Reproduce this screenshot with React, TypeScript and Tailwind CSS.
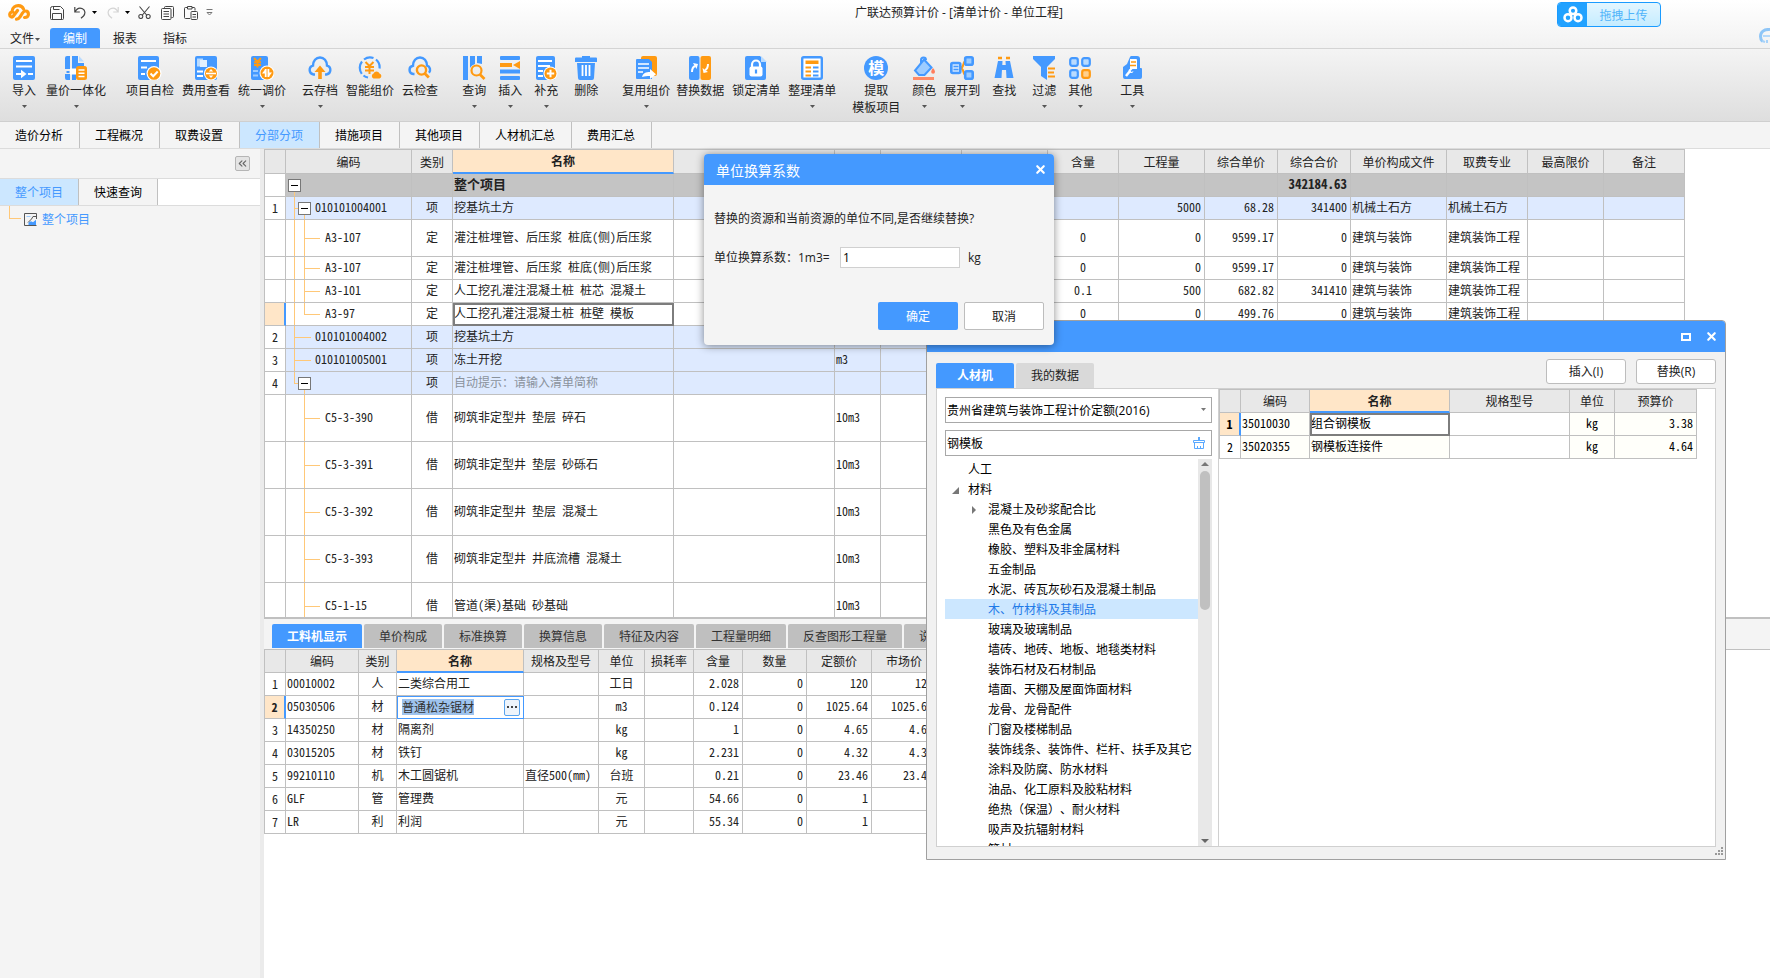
import type { ReactNode } from 'react';
import { X, ChevronsLeft } from 'lucide-react';
import { clsx } from 'clsx';

const BLUE = '#4499ff';
const ORANGE = '#ff9a12';

/* ---------- icons ---------- */

function Svg({ children, size = 24 }: { children: ReactNode; size?: number }) {
  return (
    <svg width={size} height={size} viewBox="0 0 24 24" fill="none" aria-hidden="true">
      {children}
    </svg>
  );
}

function Caret({ className = 'text-[#555]' }: { className?: string }) {
  return (
    <svg width="5" height="3" viewBox="0 0 5 3" className={className} aria-hidden="true">
      <path d="M0 0h5L2.5 3z" fill="currentColor" />
    </svg>
  );
}

const icons: Record<string, ReactNode> = {
  import: (
    <Svg>
      <rect x="1" width="22" height="24" rx="2" fill={BLUE} />
      <path d="M4 5h16M4 10.5h16M4 18h6M16 18h5" stroke="#fff" strokeWidth="2" />
      <path d="M9 13.8l5.500 4.200L9 22.200z" fill="#fff" />
    </Svg>
  ),
  integrate: (
    <Svg>
      <path d="M3 0h3v13H1V2a2 2 0 012-2zM1 18h5v6H3a2 2 0 01-2-2zM8 0h6v7h6v4h-6v2H8zM8 18h4v6H8z" fill={BLUE} />
      <path d="M15 0l5 5.500h-5z" fill="#b9dbff" />
      <path d="M2.500 16h3" stroke={BLUE} strokeWidth="2" />
      <rect x="6" y="12.500" width="6" height="6" fill="#fff" />
      <rect x="12" y="10" width="11" height="14" rx="2.500" fill={ORANGE} />
      <path d="M14.500 14h6M14.500 17.200h6M14.500 20.400h6" stroke="#fff" strokeWidth="1.500" />
    </Svg>
  ),
  check: (
    <Svg>
      <rect x="0" width="21" height="24" rx="2" fill={BLUE} />
      <path d="M3 5h15M3 11.500h6M3 18h4" stroke="#fff" strokeWidth="2" />
      <circle cx="16" cy="17.500" r="7.500" fill="#fff" />
      <circle cx="16" cy="17.500" r="6.300" fill={ORANGE} />
      <path d="M12.500 17.500l2.700 2.700 4.500-4.700" stroke="#fff" strokeWidth="2" />
    </Svg>
  ),
  cost: (
    <Svg>
      <rect x="1" width="22" height="24" rx="2" fill={BLUE} />
      <path d="M3 2.500h6v8H3z" fill="#b9dbff" />
      <path d="M6 4h7v7H6z" fill="#e3f1ff" />
      <path d="M3 15.500h6M3 20h6" stroke="#fff" strokeWidth="2" />
      <circle cx="17" cy="17.500" r="7" fill="#fff" />
      <circle cx="17" cy="17.500" r="6" fill={ORANGE} />
      <path d="M12 17.500h10" stroke="#fff" strokeWidth="1.600" />
      <path d="M14.800 15.500l2.200-2.500 2.200 2.500zM14.800 19.500L17 22l2.200-2.500z" fill="#fff" />
    </Svg>
  ),
  adjust: (
    <Svg>
      <rect x="1" width="17" height="24" rx="2" fill={BLUE} />
      <path d="M4 2l3.500 4L11 2M7.500 6v5.500M4 6.200h7M4 9h7" stroke={ORANGE} strokeWidth="1.900" />
      <path d="M3 15h5M3 19.500h5" stroke="#9dccff" strokeWidth="2" />
      <circle cx="17" cy="17" r="7.500" fill="#fff" />
      <circle cx="17" cy="17" r="6.500" fill={ORANGE} />
      <path d="M15.700 13v8M18.400 13v8" stroke="#fff" strokeWidth="1.800" />
      <path d="M12 17.500l3.500-4.500v4.500zM22 16.500L18.500 21v-4.500z" fill="#fff" />
    </Svg>
  ),
  cloudUp: (
    <Svg>
      <path d="M7 18.500H5.500A4.500 4.500 0 015 9.700C5 5 8 1.500 12 1.500S19 5 19 9.700a4.500 4.500 0 01-.5 8.800H17" stroke={BLUE} strokeWidth="2.400" />
      <path d="M12 9.500l5.500 6.500h-3.700v7h-3.600v-7H6.500z" fill={ORANGE} />
    </Svg>
  ),
  smart: (
    <Svg>
      <path d="M6 3.500A10 10 0 0115.500 2M3.800 17.800A10 10 0 014 5.500M10 21.500a10 10 0 01-4.500-2M18 3.500a10 10 0 013.500 9" stroke={BLUE} strokeWidth="2.200" />
      <path d="M7.500 6l4 4 4-4M11.500 10v8M7 11h9M7 14.500h9" stroke={ORANGE} strokeWidth="2" />
      <path d="M15.500 22.500a2.700 2.700 0 010-5 3.300 3.300 0 016 0 2.600 2.600 0 010 5z" fill={ORANGE} />
    </Svg>
  ),
  cloudCheck: (
    <Svg>
      <path d="M6.500 18H5.200A4.200 4.200 0 015 9.700C5 5 8 1.500 12 1.500S19 5 19 9.700a4.300 4.300 0 012 7" stroke={BLUE} strokeWidth="2.400" />
      <circle cx="13.500" cy="14" r="4.600" stroke={ORANGE} strokeWidth="2.400" />
      <path d="M16.800 17.500l4 4" stroke={ORANGE} strokeWidth="2.800" />
    </Svg>
  ),
  query: (
    <Svg>
      <path d="M1 0h5v24H1z" fill={BLUE} />
      <path d="M8 0h5v8a8 8 0 00-5 4zM15 0h5v8l-5-1z" fill={BLUE} />
      <circle cx="14.500" cy="14.500" r="5" stroke={ORANGE} strokeWidth="2.200" />
      <path d="M18 18.500l4.500 4.500" stroke={ORANGE} strokeWidth="2.600" />
    </Svg>
  ),
  insert: (
    <Svg>
      <path d="M3 0h18a1 1 0 011 1v2a1 1 0 01-1 1H3a1 1 0 01-1-1V1a1 1 0 011-1zM2 13.500h20v4H2zM3 20h18a1 1 0 011 1v2a1 1 0 01-1 1H3a1 1 0 01-1-1v-2a1 1 0 011-1z" fill={BLUE} />
      <path d="M2 7h12v4H2zM15 9l7-4v8z" fill={ORANGE} />
    </Svg>
  ),
  supplement: (
    <Svg>
      <rect x="2" width="19" height="24" rx="2" fill={BLUE} />
      <path d="M4 5h14M4 10h12M4 15h5M4 20h5" stroke="#fff" strokeWidth="1.800" />
      <circle cx="16.500" cy="17.500" r="7" fill="#fff" />
      <circle cx="16.500" cy="17.500" r="6" fill={ORANGE} />
      <path d="M12.800 17.500h7.400M16.500 13.800v7.400" stroke="#fff" strokeWidth="2" />
    </Svg>
  ),
  trash: (
    <Svg>
      <path d="M8 0h8v1.500h6a1 1 0 011 1V6H1V2.500a1 1 0 011-1h6zM3 7h18l-1 15a2 2 0 01-2 2H6a2 2 0 01-2-2z" fill={BLUE} />
      <path d="M8.500 9v11M12 9v11M15.500 9v11" stroke="#fff" strokeWidth="1.800" />
    </Svg>
  ),
  reuse: (
    <Svg>
      <rect x="7" width="16" height="20" rx="2" fill={ORANGE} />
      <path d="M3 3h12l3 3v17H3a1 1 0 01-1-1V4a1 1 0 011-1z" fill={BLUE} />
      <path d="M4 8h11M4 12h11M4 16h5" stroke="#fff" strokeWidth="1.700" />
      <path d="M8 21c1-4 4-5 8-5v-3l6 5.200-6 4.800v-3c-3 0-5 0-8 1z" fill="#fff" />
    </Svg>
  ),
  replace: (
    <Svg>
      <rect x="1" width="10.500" height="24" rx="2" fill={BLUE} />
      <rect x="12.500" width="10.500" height="24" rx="2" fill={ORANGE} />
      <path d="M4 16c0-3 .5-5 3-6" stroke="#fff" strokeWidth="2" />
      <path d="M5 7l5 1-1.500 5z" fill="#fff" />
      <path d="M20 8c0 3-.5 5-3 6" stroke="#fff" strokeWidth="2" />
      <path d="M14.500 12l1 5 4.500-1z" fill="#fff" />
    </Svg>
  ),
  lock: (
    <Svg>
      <path d="M3 0h13l6 6v16a2 2 0 01-2 2H3a2 2 0 01-2-2V2a2 2 0 012-2z" fill={BLUE} />
      <path d="M17 0l6 6h-6z" fill="#b9dbff" />
      <path d="M8 11V8.500a4 4 0 018 0V11" stroke="#fff" strokeWidth="2.200" />
      <rect x="5.500" y="10.500" width="13" height="10" rx="2" fill="#fff" />
      <path d="M12 13.500v4" stroke={BLUE} strokeWidth="2.200" />
    </Svg>
  ),
  tidy: (
    <Svg>
      <rect x="2.200" y="1.200" width="19.600" height="21.600" rx="1.500" fill="#fff" stroke={BLUE} strokeWidth="2.400" />
      <path d="M5.500 4.500h13V8h-13z" fill={ORANGE} />
      <path d="M5.500 11.500H11M5.500 15.500H11M5.500 19.500H11" stroke={ORANGE} strokeWidth="2" />
      <path d="M13 11.500h5.500M13 15.500h5.500M13 19.500h5.500" stroke={BLUE} strokeWidth="2" />
    </Svg>
  ),
  color: (
    <Svg>
      <path d="M9 10V4a2.500 2.500 0 015 0" stroke={BLUE} strokeWidth="2" />
      <path d="M12 3.500l7.500 8-7 7.500H7l-4-4.500z" fill="#9dccff" stroke={BLUE} strokeWidth="2" />
      <path d="M21 12c1.500 2 2 3 2 3.800a1.900 1.900 0 01-3.800 0c0-.8.500-1.800 1.800-3.800z" fill="#ff7d5c" />
      <path d="M1 21h21v3H1z" fill="#ff8a66" />
    </Svg>
  ),
  expand: (
    <Svg>
      <path d="M10 12c5 0 2-7 6-7M10 12c5 0 2 7 6 7" stroke={ORANGE} strokeWidth="2" />
      <rect x="1.300" y="7" width="9" height="10" rx="1.500" fill="#cfe6ff" stroke={BLUE} strokeWidth="2.600" />
      <path d="M3.500 10.500h5M3.500 13.500h5" stroke={BLUE} strokeWidth="1.400" />
      <rect x="15.200" y="1.300" width="7.500" height="7.500" rx="1.500" fill="#9dccff" stroke={BLUE} strokeWidth="2.600" />
      <rect x="15.200" y="15.200" width="7.500" height="7.500" rx="1.500" fill="#9dccff" stroke={BLUE} strokeWidth="2.600" />
    </Svg>
  ),
  find: (
    <Svg>
      <path d="M6 2h4M14 2h4" stroke={ORANGE} strokeWidth="2.500" />
      <path d="M6 5h4.500L9.500 22H2.500zM13.500 5H18l3.500 17h-7zM10 9h4v5h-4z" fill={BLUE} />
    </Svg>
  ),
  filter: (
    <Svg>
      <path d="M1 0h22v3l-8 8v13l-6-4v-9L1 3z" fill={BLUE} />
      <path d="M16 12.500h7M16 16.500h6M16 20.500h7" stroke={ORANGE} strokeWidth="2" />
    </Svg>
  ),
  more: (
    <Svg>
      <rect x="2.200" y="2.200" width="7.600" height="7.600" rx="2" fill="#b9dbff" stroke={BLUE} strokeWidth="2.200" />
      <rect x="14.200" y="2.200" width="7.600" height="7.600" rx="2" fill="#b9dbff" stroke={BLUE} strokeWidth="2.200" />
      <rect x="2.200" y="14.200" width="7.600" height="7.600" rx="2" fill="#b9dbff" stroke={BLUE} strokeWidth="2.200" />
      <rect x="14.200" y="14.200" width="7.600" height="7.600" rx="2" fill="#ffd08c" stroke={ORANGE} strokeWidth="2.200" />
    </Svg>
  ),
  tools: (
    <Svg>
      <path d="M7 8l3-7a2 2 0 012-1h5a3 3 0 013 3v9h1a1 1 0 011 1v8a2 2 0 01-2 2H5a2 2 0 01-2-2V11z" fill={BLUE} />
      <path d="M10 3h6a1 1 0 011 1v9h-7z" fill="#fff" />
      <path d="M11 6h5M10 9.500h6" stroke={ORANGE} strokeWidth="1.500" />
      <path d="M6 20l4-5" stroke="#fff" strokeWidth="2.500" />
      <path d="M8.500 14.500a2.500 2.500 0 014-1.500l-2 2 1 1 2-1a2.500 2.500 0 01-3 2z" fill="#fff" />
    </Svg>
  ),
  template: (
    <span className="flex size-6 items-center justify-center rounded-full bg-[#4499ff] text-base leading-none font-bold text-white">模</span>
  ),
};

/* ---------- ribbon ---------- */

type RibbonItem = { label: string; sub?: string; icon: string; gap: string; menu?: boolean };

const ribbon: RibbonItem[] = [
  { label: '导入', icon: 'import', gap: 'ml-3', menu: true },
  { label: '量价一体化', icon: 'integrate', gap: 'ml-2.5', menu: true },
  { label: '项目自检', icon: 'check', gap: 'ml-5' },
  { label: '费用查看', icon: 'cost', gap: 'ml-2' },
  { label: '统一调价', icon: 'adjust', gap: 'ml-2', menu: true },
  { label: '云存档', icon: 'cloudUp', gap: 'ml-4', menu: true },
  { label: '智能组价', icon: 'smart', gap: 'ml-2' },
  { label: '云检查', icon: 'cloudCheck', gap: 'ml-2' },
  { label: '查询', icon: 'query', gap: 'ml-6', menu: true },
  { label: '插入', icon: 'insert', gap: 'ml-3', menu: true },
  { label: '补充', icon: 'supplement', gap: 'ml-3', menu: true },
  { label: '删除', icon: 'trash', gap: 'ml-4' },
  { label: '复用组价', icon: 'reuse', gap: 'ml-6', menu: true },
  { label: '替换数据', icon: 'replace', gap: 'ml-1.5' },
  { label: '锁定清单', icon: 'lock', gap: 'ml-2' },
  { label: '整理清单', icon: 'tidy', gap: 'ml-2', menu: true },
  { label: '提取', sub: '模板项目', icon: 'template', gap: 'ml-4' },
  { label: '颜色', icon: 'color', gap: 'ml-3', menu: true },
  { label: '展开到', icon: 'expand', gap: 'ml-2', menu: true },
  { label: '查找', icon: 'find', gap: 'ml-3' },
  { label: '过滤', icon: 'filter', gap: 'ml-4', menu: true },
  { label: '其他', icon: 'more', gap: 'ml-3', menu: true },
  { label: '工具', icon: 'tools', gap: 'ml-7', menu: true },
];

function TitleBar() {
  return (
    <div className="mb-[3px] flex h-[25px] items-center text-[#444]">
      <div className="flex w-[220px] items-center pl-2">
        <svg width="22" height="17" viewBox="0 0 22 17" fill="none" stroke={ORANGE} strokeWidth="3.2" strokeLinecap="round" aria-label="广联达">
          <path d="M9.500 6.500L5 12.500c-.8 1-3.300.5-3.300-1.700 0-2 1.500-2.800 3.300-2.800M4 7.500C4.300 3.500 7.500 1.600 10.500 1.700c2.500.1 4.300 1.500 5 3.300" />
          <path d="M8.500 15.200c2 0 2.800-1.200 3.700-2.600l2.300-3.600c.8-1.300 2-2 3.200-2 1.600 0 2.700 1.400 2.700 3.200 0 2.200-1.500 3.400-3.900 3.300" />
        </svg>
        <button aria-label="保存" className="ml-5">
          <svg width="14" height="14" viewBox="0 0 14 14" fill="none" stroke="currentColor">
            <path d="M.5 2.500a2 2 0 012-2h8l3 3v9a1 1 0 01-1 1h-11a1 1 0 01-1-1zM3.500.5v3h6M2.500 13.500v-6h9v6" />
          </svg>
        </button>
        <button aria-label="撤销" className="ml-2.5 flex items-center gap-1.5">
          <svg width="12" height="13" viewBox="0 0 12 13" fill="none" stroke="currentColor" strokeWidth="1.200">
            <path d="M.8 1v5h5M1 6c2-4 5-4.500 7.500-3.300 3 1.500 3 5 1 7.300l-2.500 2.300" />
          </svg>
          <Caret className="text-black" />
        </button>
        <button aria-label="重做" className="ml-2.5 flex items-center gap-1.5">
          <svg width="12" height="13" viewBox="0 0 12 13" fill="none" stroke="#d4d4d4" strokeWidth="1.200">
            <path d="M11.200 1v5h-5M11 6C9 2 6 1.500 3.500 2.700c-3 1.500-3 5-1 7.300L5 12.300" />
          </svg>
          <Caret className="text-black" />
        </button>
        <button aria-label="剪切" className="ml-2">
          <svg width="13" height="13" viewBox="0 0 13 13" fill="none" stroke="currentColor" strokeWidth="1.100">
            <path d="M1.500.5l7.500 9M11.500.5L4 9.500" />
            <circle cx="2.800" cy="10.500" r="2" />
            <circle cx="10.200" cy="10.500" r="2" />
          </svg>
        </button>
        <button aria-label="复制" className="ml-2.5">
          <svg width="13" height="14" viewBox="0 0 13 14" fill="none" stroke="currentColor">
            <path d="M3.500 2.500v-1a1 1 0 011-1h7a1 1 0 011 1v9a1 1 0 01-1 1h-1" />
            <rect x=".5" y="2.500" width="9.500" height="11" rx="1" />
            <path d="M2.500 5.500H8M2.500 8H8M2.500 10.500H8" />
          </svg>
        </button>
        <button aria-label="粘贴" className="ml-2.5">
          <svg width="14" height="15" viewBox="0 0 14 15" fill="none" stroke="currentColor">
            <path d="M6 13.500H1.500a1 1 0 01-1-1v-9a1 1 0 011-1h2M8 2.500h2a1 1 0 011 1v2M3.500 1.500h4.500v2.500H3.500z" />
            <rect x="7" y="6.500" width="6.500" height="8" rx="1" />
            <path d="M8.500 9.500H12M8.500 12H12" />
          </svg>
        </button>
        <button aria-label="自定义" className="ml-2">
          <svg width="7" height="7" viewBox="0 0 7 7" fill="none" stroke="#777">
            <path d="M.5.5h6M1 3.500h5L3.500 6z" />
          </svg>
        </button>
      </div>
      <h1 className="flex-1 pr-[72px] text-center text-xs text-[#222]">广联达预算计价 - [清单计价 - 单位工程]</h1>
      <button className="absolute top-0.5 right-[109px] flex h-[25px] w-26 items-center overflow-hidden rounded border border-[#1a9bff] bg-gradient-to-b from-[#e3f6ff] to-[#c5ecff] text-xs text-[#4fb4fa]">
        <span className="flex h-full w-[29px] items-center justify-center bg-[#22a2ff]">
          <svg width="20" height="17" viewBox="0 0 20 17" fill="none" stroke="#fff" strokeWidth="2.500" aria-hidden="true">
            <circle cx="10" cy="4.700" r="3.300" />
            <circle cx="5" cy="11.700" r="3.500" />
            <circle cx="15" cy="11.700" r="3.500" />
          </svg>
        </span>
        <span className="flex-1 pt-0.5 text-center">拖拽上传</span>
      </button>
      <svg className="absolute top-7 right-0" width="11" height="16" viewBox="0 0 11 16" fill="none" aria-hidden="true">
        <path d="M11 1.500C5 1 1.500 4 1.500 8.500c0 2 .8 3.800 2 5" stroke="#8fc6f7" strokeWidth="3" />
        <path d="M4 8h7" stroke="#b5d9fa" strokeWidth="2" />
        <path d="M8 12v3M3 13l3 1" stroke="#a7d2f9" strokeWidth="2" />
      </svg>
    </div>
  );
}

function Header() {
  return (
    <header className="relative">
      <div className="flow-root h-[49px] border-b border-[#d4d4d4] bg-gradient-to-b from-white to-[#f2f2f2]">
        <TitleBar />
        <nav className="flex h-5 text-xs text-[#222]">
          <button className="flex w-[50px] items-center justify-center gap-px pt-0.5">文件<Caret /></button>
          <button className="w-[50px] rounded-t-[3px] bg-[#4499ff] pt-0.5 text-white">编制</button>
          <button className="w-[50px] pt-0.5">报表</button>
          <button className="w-[50px] pt-0.5">指标</button>
        </nav>
      </div>
      <div className="flex h-[73px] border-b border-[#cfcfcf] bg-gradient-to-b from-[#f4f4f4] to-[#dedede] pt-[7px]">
        {ribbon.map((item) => (
          <button
            key={item.label}
            className={clsx('flex shrink-0 flex-col items-center text-xs leading-[17px] text-[#222]', item.gap)}
          >
            <span className="mb-0.5 block h-6">{icons[item.icon]}</span>
            <span>{item.label}</span>
            {item.sub && <span>{item.sub}</span>}
            {item.menu && <span className="mt-1.5"><Caret /></span>}
          </button>
        ))}
      </div>
    </header>
  );
}

const pageTabs = ['造价分析', '工程概况', '取费设置', '分部分项', '措施项目', '其他项目', '人材机汇总', '费用汇总'];

function PageTabs() {
  return (
    <nav className="flex h-[27px] border-b border-[#dcdcdc] bg-[#f4f4f4]">
      {pageTabs.map((tab) => (
        <button
          key={tab}
          className={clsx(
            'border-r border-[#c0c0c0] pt-0.5 pr-4 pl-[15px] text-xs',
            tab === '分部分项' ? 'bg-[#cce7ff] text-[#4499ff]' : 'text-black'
          )}
        >
          {tab}
        </button>
      ))}
    </nav>
  );
}

function Sidebar() {
  return (
    <aside className="w-[260px] shrink-0 bg-[#f4f4f4] text-xs">
      <div className="flex h-[30px] items-center justify-end border-b border-[#dcdcdc] pr-2.5">
        <button aria-label="收起" className="flex h-[15px] w-[15px] items-center justify-center rounded-[2px] border border-[#b5b5b5] bg-[#e4e4e4] text-[#666]">
          <ChevronsLeft size={13} strokeWidth={2} />
        </button>
      </div>
      <div className="flex h-[27px] border-b border-[#dcdcdc] bg-white">
        <button className="border-r border-[#c0c0c0] bg-[#cce7ff] px-[15px] pt-0.5 text-[#4499ff]">整个项目</button>
        <button className="border-r border-[#c0c0c0] bg-[#f4f4f4] px-[15px] pt-0.5 text-black">快速查询</button>
      </div>
      <div className="flex pl-[9px] text-[#4499ff]">
        <span className="h-[13px] w-3 border-b border-l border-[#ffc878]" />
        <a href="#project" className="ml-[3px] flex h-[26px] items-center gap-[5px]">
          <svg width="13" height="13" viewBox="0 0 13 13" fill="none" aria-hidden="true">
            <path d="M12.500 6V.5H.5v12h12" stroke="#555" />
            <path d="M2.500 3.500h4" stroke="#9dccff" />
            <path d="M4 9.500L7.500 6l1.500-2.500h3.500" stroke="#555" />
            <path d="M4.500 12V9.500l2.500-1.300 2 1 3-2.500V12z" fill={BLUE} />
          </svg>
          <span className="pt-0.5">整个项目</span>
        </a>
      </div>
    </aside>
  );
}

/* ---------- tables ---------- */

type Align = 'left' | 'center' | 'right';
type Column = { title: string; width: number; align: Align };

const alignClass: Record<Align, string> = {
  left: 'pl-px pr-0.5 text-left',
  center: 'text-center',
  right: 'px-[3px] text-right',
};

const tableClass =
  "table-fixed border-separate border-spacing-0 border-t border-l border-[#c0c0c0] font-['Noto_Sans_Mono_CJK_SC','Noto_Sans_CJK_SC',monospace] text-xs leading-4 text-[#222]";
const cellClass = 'overflow-hidden border-r border-b border-[#c0c0c0] p-0 whitespace-nowrap';

function TableHead({ columns, height = 'h-[23px]' }: { columns: Column[]; height?: string }) {
  return (
    <>
      <colgroup>
        {columns.map((col, i) => (
          <col key={i} style={{ width: col.width }} />
        ))}
      </colgroup>
      <thead>
        <tr className={height}>
          {columns.map((col, i) => (
            <th
              key={i}
              className={clsx(
                cellClass,
                col.title === '名称'
                  ? 'border-b-2 border-b-[#4499ff] bg-[#ffe6c8] font-bold'
                  : 'bg-[#e8e8e8] font-normal'
              )}
            >
              {col.title}
            </th>
          ))}
        </tr>
      </thead>
    </>
  );
}

const mainColumns: Column[] = [
  { title: '', width: 21, align: 'center' },
  { title: '编码', width: 126, align: 'left' },
  { title: '类别', width: 41, align: 'center' },
  { title: '名称', width: 221, align: 'left' },
  { title: '', width: 161, align: 'left' },
  { title: '', width: 46, align: 'left' },
  { title: '', width: 81, align: 'left' },
  { title: '', width: 86, align: 'left' },
  { title: '含量', width: 71, align: 'center' },
  { title: '工程量', width: 86, align: 'right' },
  { title: '综合单价', width: 73, align: 'right' },
  { title: '综合合价', width: 73, align: 'right' },
  { title: '单价构成文件', width: 96, align: 'left' },
  { title: '取费专业', width: 81, align: 'left' },
  { title: '最高限价', width: 76, align: 'left' },
  { title: '备注', width: 81, align: 'left' },
];

type MainRow = {
  no?: string;
  level: 0 | 1 | 2;
  box?: boolean;
  outer?: boolean; // the project line goes on below this row
  inner?: boolean; // the item line goes on below this row
  height: string;
  code: string;
  kind: string;
  name: string;
  values: string[];
  tone?: string;
  current?: boolean;
};

const H1 = 'h-[22px]';
const H2 = 'h-9';
const H3 = 'h-[46px]';
const LIST = 'bg-[#deeaff]';
const arch = ['建筑与装饰', '建筑装饰工程', '', ''];

const mainRows: MainRow[] = [
  { level: 0, box: true, height: H1, code: '', kind: '', name: '整个项目', values: ['', '', '', '', '', '', '', '342184.63', '', '', '', ''], tone: 'bg-[#c4c4c4] font-bold text-[13px]' },
  { no: '1', level: 1, box: true, outer: true, height: H1, code: '010101004001', kind: '项', name: '挖基坑土方', values: ['', '', '', '', '', '5000', '68.28', '341400', '机械土石方', '机械土石方', '', ''], tone: LIST },
  { level: 2, outer: true, inner: true, height: H2, code: 'A3-107', kind: '定', name: '灌注桩埋管、后压浆 桩底(侧)后压浆', values: ['', '', '', '', '0', '0', '9599.17', '0', ...arch] },
  { level: 2, outer: true, inner: true, height: H1, code: 'A3-107', kind: '定', name: '灌注桩埋管、后压浆 桩底(侧)后压浆', values: ['', '', '', '', '0', '0', '9599.17', '0', ...arch] },
  { level: 2, outer: true, inner: true, height: H1, code: 'A3-101', kind: '定', name: '人工挖孔灌注混凝土桩 桩芯 混凝土', values: ['', '', '', '', '0.1', '500', '682.82', '341410', ...arch] },
  { level: 2, outer: true, height: H1, code: 'A3-97', kind: '定', name: '人工挖孔灌注混凝土桩 桩壁 模板', values: ['', '', '', '', '0', '0', '499.76', '0', ...arch], current: true },
  { no: '2', level: 1, outer: true, height: H1, code: '010101004002', kind: '项', name: '挖基坑土方', values: ['', '', '', '', '', '', '', '', '', '', '', ''], tone: LIST },
  { no: '3', level: 1, outer: true, height: H1, code: '010101005001', kind: '项', name: '冻土开挖', values: ['', 'm3', '', '', '', '', '', '', '', '', '', ''], tone: LIST },
  { no: '4', level: 1, box: true, height: H1, code: '', kind: '项', name: '自动提示：请输入清单简称', values: ['', '', '', '', '', '', '', '', '', '', '', ''], tone: LIST },
  { level: 2, inner: true, height: H3, code: 'C5-3-390', kind: '借', name: '砌筑非定型井 垫层 碎石', values: ['', '10m3', '', '', '', '', '', '', '', '', '', ''] },
  { level: 2, inner: true, height: H3, code: 'C5-3-391', kind: '借', name: '砌筑非定型井 垫层 砂砾石', values: ['', '10m3', '', '', '', '', '', '', '', '', '', ''] },
  { level: 2, inner: true, height: H3, code: 'C5-3-392', kind: '借', name: '砌筑非定型井 垫层 混凝土', values: ['', '10m3', '', '', '', '', '', '', '', '', '', ''] },
  { level: 2, inner: true, height: H3, code: 'C5-3-393', kind: '借', name: '砌筑非定型井 井底流槽 混凝土', values: ['', '10m3', '', '', '', '', '', '', '', '', '', ''] },
  { level: 2, inner: true, height: H3, code: 'C5-1-15', kind: '借', name: '管道(渠)基础 砂基础', values: ['', '10m3', '', '', '', '', '', '', '', '', '', ''] },
];

function Guide({ width, elbow, down }: { width: string; elbow?: boolean; down?: boolean }) {
  return (
    <span className={clsx('-mb-px flex shrink-0 flex-col self-stretch', width)}>
      <span className={clsx('flex-1 border-l border-[#ffc878]', elbow && 'border-b')} />
      <span className={clsx('flex-1', down && 'border-l border-[#ffc878]')} />
    </span>
  );
}

function Toggle() {
  return (
    <span className="-mb-px flex w-[13px] shrink-0 flex-col items-center self-stretch">
      <span className="flex-1" />
      <button aria-label="折叠" className="flex size-[13px] items-center justify-center border border-[#777] bg-white">
        <span className="h-px w-[7px] bg-black" />
      </button>
      <span className="w-px flex-1 bg-[#ffc878]" />
    </span>
  );
}

function CodeCell({ row }: { row: MainRow }) {
  return (
    <div className={clsx('flex items-center', row.height)}>
      {row.level === 0 && <span className="w-0.5 shrink-0" />}
      {row.level > 0 && <span className="w-2 shrink-0" />}
      {row.level === 1 && <Guide width={row.box ? 'w-1' : 'w-[17px]'} elbow down={row.outer} />}
      {row.level === 2 && (row.outer ? <Guide width="w-2.5" down /> : <span className="w-2.5 shrink-0" />)}
      {row.level === 2 && <Guide width="w-4" elbow down={row.inner} />}
      {row.box && <Toggle />}
      <span className={clsx('pb-0.5', row.level === 2 ? 'ml-[5px]' : 'ml-1')}>{row.code}</span>
    </div>
  );
}

function MainGrid() {
  return (
    <div className="h-[468px] overflow-hidden bg-white">
      <table className={clsx(tableClass, 'w-[1421px]')}>
        <TableHead columns={mainColumns} height="h-6" />
        <tbody>
          {mainRows.map((row, i) => (
            <tr key={i} className={row.tone}>
              <td
                className={clsx(
                  cellClass,
                  'text-center text-xs font-normal',
                  row.current ? 'border-r-2 border-r-[#4499ff] bg-[#ffe6c8]' : 'bg-white'
                )}
              >
                {row.no}
              </td>
              <td className={cellClass}><CodeCell row={row} /></td>
              <td className={clsx(cellClass, 'pb-0.5 text-center')}>{row.kind}</td>
              <td
                className={clsx(
                  cellClass,
                  'pr-0.5 pb-0.5 pl-px',
                  row.current && 'outline-2 -outline-offset-2 outline-[#7d7d7d]',
                  row.no === '4' && 'text-[#8a929c]'
                )}
              >
                {row.name}
              </td>
              {row.values.map((value, j) => (
                <td key={j} className={clsx(cellClass, 'pb-0.5', alignClass[mainColumns[j + 4].align])}>
                  {value}
                </td>
              ))}
            </tr>
          ))}
        </tbody>
      </table>
    </div>
  );
}

const detailTabs = ['工料机显示', '单价构成', '标准换算', '换算信息', '特征及内容', '工程量明细', '反查图形工程量', '说明信息'];

const detailColumns: Column[] = [
  { title: '', width: 21, align: 'center' },
  { title: '编码', width: 73, align: 'left' },
  { title: '类别', width: 38, align: 'center' },
  { title: '名称', width: 127, align: 'left' },
  { title: '规格及型号', width: 75, align: 'left' },
  { title: '单位', width: 46, align: 'center' },
  { title: '损耗率', width: 49, align: 'right' },
  { title: '含量', width: 49, align: 'right' },
  { title: '数量', width: 64, align: 'right' },
  { title: '定额价', width: 65, align: 'right' },
  { title: '市场价', width: 65, align: 'right' },
];

const detailRows = [
  ['1', '00010002', '人', '二类综合用工', '', '工日', '', '2.028', '0', '120', '120'],
  ['2', '05030506', '材', '普通松杂锯材', '', 'm3', '', '0.124', '0', '1025.64', '1025.64'],
  ['3', '14350250', '材', '隔离剂', '', 'kg', '', '1', '0', '4.65', '4.65'],
  ['4', '03015205', '材', '铁钉', '', 'kg', '', '2.231', '0', '4.32', '4.32'],
  ['5', '99210110', '机', '木工圆锯机', '直径500(mm)', '台班', '', '0.21', '0', '23.46', '23.46'],
  ['6', 'GLF', '管', '管理费', '', '元', '', '54.66', '0', '1', '1'],
  ['7', 'LR', '利', '利润', '', '元', '', '55.34', '0', '1', '1'],
];

function DetailPane() {
  return (
    <section className="border-t-2 border-[#c0c0c0]">
      <div className="flex h-[31px] items-end gap-0.5 border-b border-[#c0c0c0] bg-[#f4f4f4] pb-px pl-2">
        {detailTabs.map((tab, i) => (
          <button
            key={tab}
            className={clsx(
              'h-6 shrink-0 rounded-t-[2px] px-[15px] pt-0.5 text-xs',
              i === 0 ? 'bg-[#4499ff] font-bold text-white' : 'bg-[#bfbfbf] text-[#333]'
            )}
          >
            {tab}
          </button>
        ))}
      </div>
      <table className={clsx(tableClass, 'w-[673px] border-t-0')}>
        <TableHead columns={detailColumns} />
        <tbody>
          {detailRows.map((row) => {
            const editing = row[0] === '2';
            return (
              <tr key={row[0]} className="h-[23px]">
                {row.map((value, i) => (
                  <td
                    key={i}
                    className={clsx(
                      cellClass,
                      alignClass[detailColumns[i].align],
                      i > 0 && !(editing && i === 3) && 'pb-0.5',
                      editing && i === 0 && 'border-r-2 border-r-[#4499ff] bg-[#ffe6c8] font-bold',
                      editing && i === 3 && 'outline -outline-offset-1 outline-[#4499ff]'
                    )}
                  >
                    {editing && i === 3 ? (
                      <span className="flex items-center justify-between pr-px pl-1">
                        <input aria-label="名称" defaultValue={value} className="h-4 w-[72px] bg-[#9ec3ee] text-[#333]" />
                        <button aria-label="选择" className="flex h-[17px] w-4 items-center justify-center gap-0.5 rounded-[2px] border border-[#5aa4ee] bg-[#eef4fb]">
                          <span className="size-0.5 bg-[#444]" />
                          <span className="size-0.5 bg-[#444]" />
                          <span className="size-0.5 bg-[#444]" />
                        </button>
                      </span>
                    ) : (
                      value
                    )}
                  </td>
                ))}
              </tr>
            );
          })}
        </tbody>
      </table>
    </section>
  );
}

/* ---------- resource window ---------- */

const materials = [
  '混凝土及砂浆配合比', '黑色及有色金属', '橡胶、塑料及非金属材料', '五金制品', '水泥、砖瓦灰砂石及混凝土制品',
  '木、竹材料及其制品', '玻璃及玻璃制品', '墙砖、地砖、地板、地毯类材料', '装饰石材及石材制品', '墙面、天棚及屋面饰面材料',
  '龙骨、龙骨配件', '门窗及楼梯制品', '装饰线条、装饰件、栏杆、扶手及其它', '涂料及防腐、防水材料', '油品、化工原料及胶粘材料',
  '绝热（保温）、耐火材料', '吸声及抗辐射材料', '管材',
];

const resourceColumns: Column[] = [
  { title: '', width: 21, align: 'center' },
  { title: '编码', width: 69, align: 'left' },
  { title: '名称', width: 140, align: 'left' },
  { title: '规格型号', width: 120, align: 'left' },
  { title: '单位', width: 45, align: 'center' },
  { title: '预算价', width: 82, align: 'right' },
];

const resourceRows = [
  ['1', '35010030', '组合钢模板', '', 'kg', '3.38'],
  ['2', '35020355', '钢模板连接件', '', 'kg', '4.64'],
];

function MaterialTree() {
  return (
    <div className="mt-[3px] flex min-h-0 flex-1 overflow-hidden">
      <ul className="min-w-0 flex-1 leading-[18px] whitespace-nowrap text-black [text-spacing-trim:space-all]">
        <li className="h-5 pt-0.5 pl-[23px]">人工</li>
        <li className="flex h-5 items-center pt-0.5 pl-[7px]">
          <svg width="7" height="7" viewBox="0 0 7 7" aria-hidden="true"><path d="M7 0v7H0z" fill="#777" /></svg>
          <span className="ml-[9px]">材料</span>
        </li>
        {materials.map((name, i) => (
          <li
            key={name}
            className={clsx('flex h-5 items-center pt-0.5', i === 5 && 'bg-[#cce7ff] text-[#1f7ae8]')}
          >
            <span className="flex w-[43px] shrink-0 pl-[27px]">
              {i === 0 && <svg width="4" height="8" viewBox="0 0 4 8" aria-hidden="true"><path d="M0 0l4 4-4 4z" fill="#777" /></svg>}
            </span>
            {name}
          </li>
        ))}
      </ul>
      <div className="flex w-3.5 shrink-0 flex-col items-center bg-[#e8e8e8] pt-[3px] pb-[3px]">
        <svg width="8" height="4" viewBox="0 0 8 4" aria-hidden="true"><path d="M0 4l4-4 4 4z" fill="#777" /></svg>
        <span className="mt-[5px] h-[139px] w-2.5 rounded-full bg-[#c0c0c0]" />
        <span className="flex-1" />
        <svg width="8" height="4" viewBox="0 0 8 4" aria-hidden="true"><path d="M0 0l4 4 4-4z" fill="#666" /></svg>
      </div>
    </div>
  );
}

function ResourceWindow() {
  return (
    <section role="dialog" aria-label="人材机" className="absolute top-[320px] left-[926px] flex h-[540px] w-[800px] flex-col overflow-hidden rounded-t-[4px] border border-[#a0a0a0] bg-[#f1f1f1] text-xs">
      <div className="flex h-[31px] shrink-0 items-center justify-end gap-3.5 bg-[#4499ff] pr-[7px] text-white">
        <button aria-label="最大化" className="h-2 w-2.5 border-2 border-white" />
        <button aria-label="关闭"><X size={13} strokeWidth={4} /></button>
      </div>
      <div className="flex h-9 shrink-0 items-end px-[9px]">
        <button className="h-[25px] w-[78px] rounded-t-[2px] bg-[#4499ff] font-bold text-white">人材机</button>
        <button className="ml-0.5 h-[25px] w-[78px] rounded-t-[2px] bg-[#d9d9d9] text-[#222]">我的数据</button>
        <button className="mb-1 ml-auto h-[25px] w-20 rounded-[3px] border border-[#bdbdbd] bg-white text-[#222]">插入(I)</button>
        <button className="mb-1 ml-2.5 h-[25px] w-20 rounded-[3px] border border-[#bdbdbd] bg-white text-[#222]">替换(R)</button>
      </div>
      <div className="mx-[9px] mb-3 flex min-h-0 flex-1 border border-[#d0d0d0] bg-white">
        <div className="flex w-[282px] shrink-0 flex-col border-r border-[#d0d0d0] pt-2 pr-1.5 pl-2">
          <label className="relative block">
            <select aria-label="定额库" className="block h-[26px] w-full appearance-none border border-[#a8a8a8] bg-white px-px pt-0.5 text-black">
              <option>贵州省建筑与装饰工程计价定额(2016)</option>
            </select>
            <span className="absolute top-[11px] right-[6px] flex"><Caret className="text-[#777]" /></span>
          </label>
          <div className="mt-[7px] flex h-[26px] items-center border border-[#a8a8a8] bg-white pr-1.5 pl-px">
            <input aria-label="查询" defaultValue="钢模板" className="h-5 min-w-0 flex-1 text-black" />
            <button aria-label="清除">
              <svg width="12" height="12" viewBox="0 0 12 12" fill="none" stroke="#5aa9ff" aria-hidden="true">
                <path d="M6 0v4" strokeWidth="2" />
                <path d="M.5 3.500h11v2H.5zM1.500 5.500v6h9v-6M4.500 9v2.500M7.500 9v2.500" />
              </svg>
            </button>
          </div>
          <MaterialTree />
        </div>
        <table className={clsx(tableClass, 'w-[478px] self-start')}>
          <TableHead columns={resourceColumns} />
          <tbody>
            {resourceRows.map((row, r) => (
              <tr key={row[0]} className="h-[23px] bg-[#fffffa]">
                {row.map((value, i) => (
                  <td
                    key={i}
                    className={clsx(
                      cellClass,
                      alignClass[resourceColumns[i].align],
                      'text-black',
                      i > 0 && 'pb-0.5',
                      i === 0 && (r === 0 ? 'border-r-2 border-r-[#4499ff] bg-[#ffe6c8] font-bold' : 'bg-white'),
                      i === 2 && r === 0 && 'bg-white outline-2 -outline-offset-2 outline-[#7d7d7d]',
                      i === 3 && 'bg-white'
                    )}
                  >
                    {value}
                  </td>
                ))}
              </tr>
            ))}
          </tbody>
        </table>
      </div>
      <svg className="absolute right-0.5 bottom-1" width="8" height="8" viewBox="0 0 8 8" fill="#999" aria-hidden="true">
        <path d="M6 0h2v2H6zM3 3h2v2H3zM6 3h2v2H6zM0 6h2v2H0zM3 6h2v2H3zM6 6h2v2H6z" />
      </svg>
    </section>
  );
}

function UnitDialog() {
  return (
    <section role="dialog" aria-labelledby="unit-title" className="absolute top-[154px] left-[704px] w-[350px] overflow-hidden rounded bg-[#f4f4f4] text-xs text-[#222] shadow-[0_1px_8px_rgba(0,0,0,0.45)]">
      <div className="flex h-[31px] items-center justify-between bg-[#4499ff] pr-[7px] pl-3 text-white">
        <h2 id="unit-title" className="pt-0.5 text-sm">单位换算系数</h2>
        <button aria-label="关闭"><X size={13} strokeWidth={4} /></button>
      </div>
      <div className="px-2.5 pt-[26px] pb-[15px]">
        <p className="leading-4">替换的资源和当前资源的单位不同,是否继续替换?</p>
        <div className="mt-5 flex h-[21px] items-center">
          <label htmlFor="factor" className="w-[126px]">单位换算系数：1m3=</label>
          <input id="factor" defaultValue="1" className="h-[21px] w-[120px] border border-[#d0d0d0] bg-white px-0.5 text-black" />
          <span className="ml-2">kg</span>
        </div>
        <div className="mt-[34px] flex justify-end gap-1.5">
          <button className="h-7 w-20 rounded-[2px] bg-[#4499ff] pt-0.5 text-white">确定</button>
          <button className="h-7 w-20 rounded-[2px] border border-[#bdbdbd] bg-white pt-0.5">取消</button>
        </div>
      </div>
    </section>
  );
}

export default function App() {
  return (
    <div className="relative flex min-h-screen flex-col overflow-hidden bg-white font-['Open_Sans','Noto_Sans_CJK_SC',sans-serif]">
      <Header />
      <PageTabs />
      <div className="flex flex-1">
        <Sidebar />
        <main className="min-w-0 flex-1 overflow-hidden border-l-4 border-[#ebebeb]">
          <MainGrid />
          <DetailPane />
        </main>
      </div>
      <ResourceWindow />
      <UnitDialog />
    </div>
  );
}
